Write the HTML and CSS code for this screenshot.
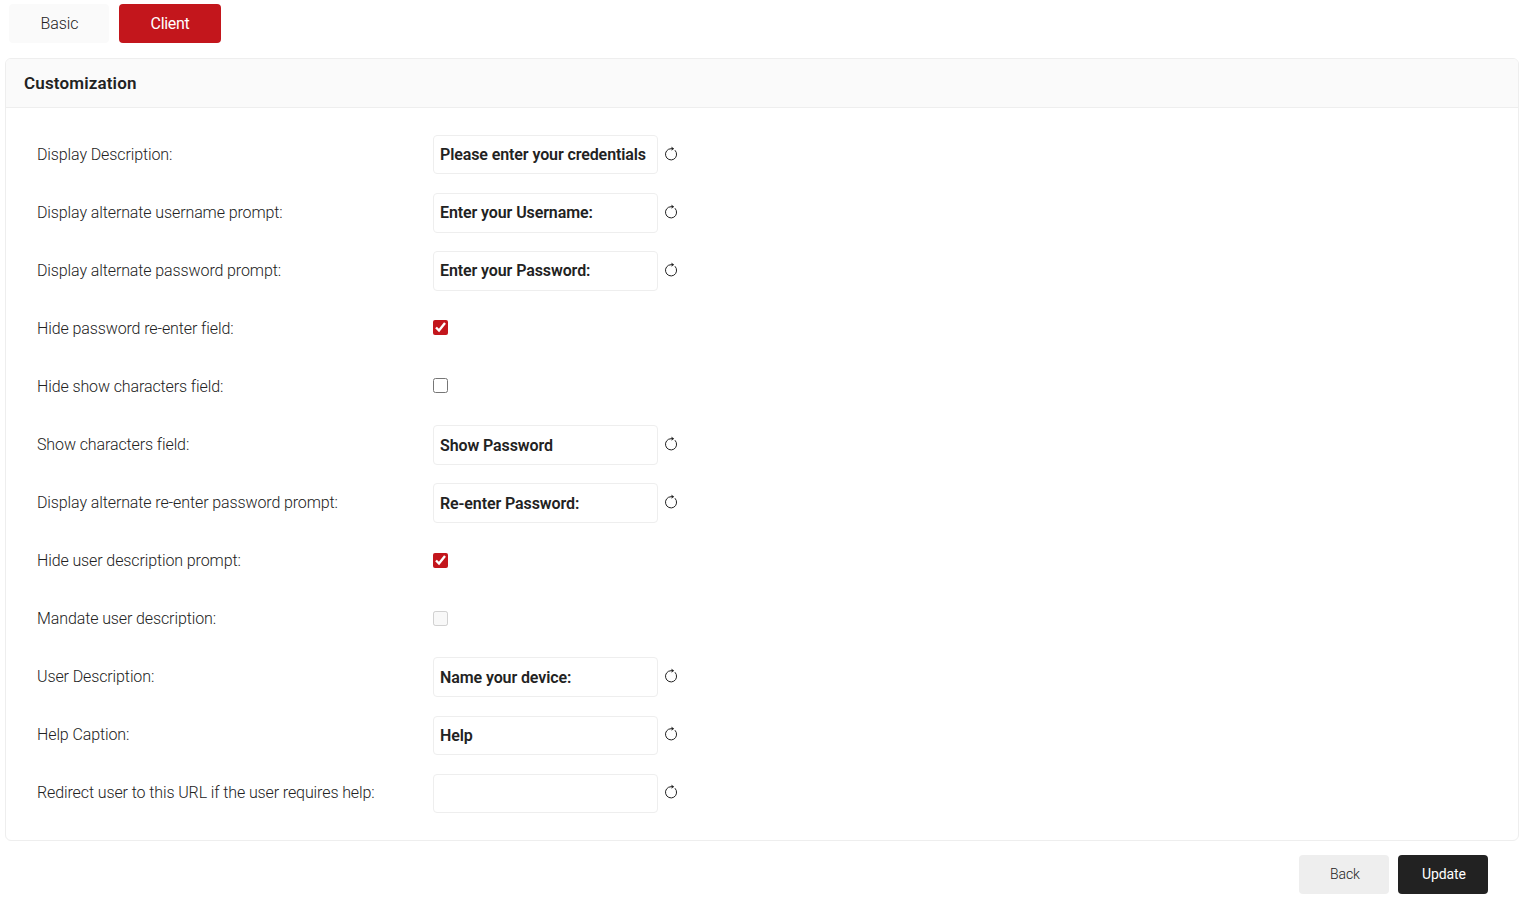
FILE: index.html
```html
<!DOCTYPE html>
<html lang="en">
<head>
    <meta charset="UTF-8">
    <meta name="viewport" content="width=device-width, initial-scale=1.0">
    <title>Customization</title>
    <link rel="stylesheet" href="styles.css">
</head>
<body>
    <!-- Refresh icon, reused by every text field -->
    <svg class="sprite" width="0" height="0">
        <symbol id="reset" viewBox="0 0 16 16">
            <path d="M9.8 2.7H8A5.6 5.6 0 1 0 12.2 4.5" fill="none" stroke="#222" stroke-width="1" stroke-linecap="round"/>
            <path d="M8.2.6 11.2 2.8 8.2 4.8 9 2.7z" fill="#222"/>
        </symbol>
    </svg>

    <div class="tabs">
        <button class="tab">Basic</button>
        <button class="tab active">Client</button>
    </div>

    <div class="card">
        <div class="card-header">Customization</div>
        <div class="card-body">
            <div class="row">
                <label for="description">Display Description:</label>
                <input type="text" id="description" value="Please enter your credentials">
                <svg class="reset"><use href="#reset"/></svg>
            </div>
            <div class="row">
                <label for="username">Display alternate username prompt:</label>
                <input type="text" id="username" value="Enter your Username:">
                <svg class="reset"><use href="#reset"/></svg>
            </div>
            <div class="row">
                <label for="password">Display alternate password prompt:</label>
                <input type="text" id="password" value="Enter your Password:">
                <svg class="reset"><use href="#reset"/></svg>
            </div>
            <div class="row">
                <label for="hide-reenter">Hide password re-enter field:</label>
                <input type="checkbox" id="hide-reenter" checked>
            </div>
            <div class="row">
                <label for="hide-show">Hide show characters field:</label>
                <input type="checkbox" id="hide-show">
            </div>
            <div class="row">
                <label for="show">Show characters field:</label>
                <input type="text" id="show" value="Show Password">
                <svg class="reset"><use href="#reset"/></svg>
            </div>
            <div class="row">
                <label for="reenter">Display alternate re-enter password prompt:</label>
                <input type="text" id="reenter" value="Re-enter Password:">
                <svg class="reset"><use href="#reset"/></svg>
            </div>
            <div class="row">
                <label for="hide-user">Hide user description prompt:</label>
                <input type="checkbox" id="hide-user" checked>
            </div>
            <div class="row">
                <label for="mandate">Mandate user description:</label>
                <input type="checkbox" id="mandate" disabled>
            </div>
            <div class="row">
                <label for="user">User Description:</label>
                <input type="text" id="user" value="Name your device:">
                <svg class="reset"><use href="#reset"/></svg>
            </div>
            <div class="row">
                <label for="help">Help Caption:</label>
                <input type="text" id="help" value="Help">
                <svg class="reset"><use href="#reset"/></svg>
            </div>
            <div class="row">
                <label for="url">Redirect user to this URL if the user requires help:</label>
                <input type="text" id="url">
                <svg class="reset"><use href="#reset"/></svg>
            </div>
        </div>
    </div>

    <div class="actions">
        <button class="btn">Back</button>
        <button class="btn btn-dark">Update</button>
    </div>
</body>
</html>
```
FILE: styles.css
```css
* {
    box-sizing: border-box;
}

body {
    margin: 0;
    padding: 4px 9px 0 5px;
    font-family: Roboto, sans-serif;
    font-size: 16px;
    font-weight: 300;
    color: #222;
    background: #fff;
    overflow: hidden;
}

.sprite {
    display: block;
}

button {
    font-family: inherit;
    font-weight: 300;
    border: none;
    border-radius: 4px;
    padding: 0;
    color: #222;
}

.tabs {
    display: flex;
    gap: 10px;
    padding-left: 4px;
}

.tab {
    width: 100px;
    height: 39px;
    padding-left: 1px;
    font-size: 16px;
    letter-spacing: -0.1px;
    background: #fafafa;
}

.tab.active {
    width: 102px;
    padding-left: 0;
    background: #c3161c;
    color: #fff;
    font-weight: 400;
    letter-spacing: -0.3px;
}

.card {
    margin-top: 15px;
    height: 783px;
    border: 1px solid #eee;
    border-radius: 6px;
    overflow: hidden;
}

.card-header {
    height: 49px;
    padding-left: 18px;
    line-height: 49px;
    font-size: 17px;
    font-weight: 600;
    letter-spacing: 0.15px;
    background: #fafafa;
    border-bottom: 1px solid #eee;
}

.card-body {
    padding: 17.6px 0 0 31px;
}

.row {
    display: flex;
    align-items: center;
    height: 58.08px;
}

.row label {
    width: 396px;
    padding-bottom: 1.06px;
    letter-spacing: -0.11px;
}

input[type="text"] {
    width: 225px;
    height: 39.7px;
    padding: 0.1px 6px 0;
    border: 1px solid #eee;
    border-radius: 4px;
    font: 600 16px Roboto, sans-serif;
    letter-spacing: -0.1px;
    color: #222;
    background: #fff;
}

input[type="checkbox"] {
    width: 15px;
    height: 15px;
    margin: 0 0 2px;
    accent-color: #c3161c;
}

.reset {
    width: 16px;
    height: 16px;
    margin: 0 0 2px 5px;
}

.actions {
    display: flex;
    justify-content: flex-end;
    gap: 9px;
    padding: 14px 31px 0 0;
}

.btn {
    width: 90px;
    height: 39px;
    padding: 0 0 1px 2px;
    font-size: 14px;
    letter-spacing: -0.1px;
    background: #eee;
}

.btn-dark {
    background: #222;
    color: #fff;
    font-weight: 400;
}
```
